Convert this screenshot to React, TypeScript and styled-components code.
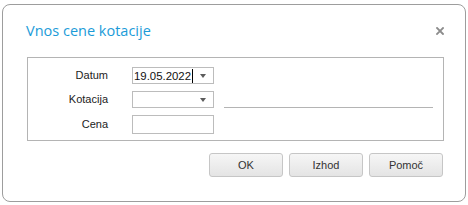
import React from "react";
import styled, { createGlobalStyle } from "styled-components";

const GlobalStyle = createGlobalStyle`
  html, body {
    margin: 0;
    padding: 0;
    background: #fff;
  }
  body {
    font-family: "Liberation Sans", Arial, sans-serif;
    font-size: 11px;
    color: #222;
  }
`;

type FieldProps = {
  label: string;
  value?: string;
  dropdown?: boolean;
  focused?: boolean;
  tall?: boolean;
  line?: boolean;
};

const Field = ({ label, value, dropdown, focused, tall, line }: FieldProps) => (
  <>
    <Label>{label}</Label>
    <InputBox $tall={tall}>
      <InputText>
        {value}
        {focused && <Caret />}
      </InputText>
      {dropdown && <Arrow />}
    </InputBox>
    <Cell>{line && <Rule />}</Cell>
  </>
);

const App = () => {
  return (
    <>
      <GlobalStyle />
      <Dialog>
        <Header>
          <Title>Vnos cene kotacije</Title>
          <CloseButton aria-label="close">
            <svg width="8" height="8" viewBox="0 0 8 8">
              <path
                d="M1 1 L7 7 M7 1 L1 7"
                stroke="#8c8c8c"
                strokeWidth="1.8"
                strokeLinecap="square"
              />
            </svg>
          </CloseButton>
        </Header>

        <FieldBox>
          <Field label="Datum" value="19.05.2022" dropdown focused />
          <Field label="Kotacija" dropdown line />
          <Field label="Cena" tall />
        </FieldBox>

        <Buttons>
          <Button>OK</Button>
          <Button>Izhod</Button>
          <Button>Pomoč</Button>
        </Buttons>
      </Dialog>
    </>
  );
};
export default App;

const Dialog = styled.div`
  box-sizing: border-box;
  width: 464px;
  margin: 4px 0 0 2px;
  border: 1px solid #9d9d9d;
  border-radius: 8px;
  background: #fff;
  padding: 13px 21px 24px 24px;
`;

const Header = styled.div`
  display: flex;
  align-items: center;
  justify-content: space-between;
  height: 26px;
  margin-left: -1px;
`;

const Title = styled.h1`
  margin: 0;
  font-family: "Open Sans", "Noto Sans", sans-serif;
  font-weight: 400;
  font-size: 14.5px;
  color: #1b9bd8;
  line-height: 20px;
`;

const CloseButton = styled.button`
  display: flex;
  align-items: center;
  justify-content: center;
  width: 9px;
  height: 9px;
  padding: 0;
  border: none;
  background: none;
  cursor: pointer;
`;

const FieldBox = styled.div`
  box-sizing: border-box;
  width: 417px;
  margin-top: 13px;
  border: 1px solid #b4b4b4;
  padding: 9px 0 7px 0;
  display: grid;
  grid-template-columns: 104px 82px 219px;
  grid-template-rows: 17px 17px 18px;
  row-gap: 7px;
  align-items: center;
`;

const Label = styled.div`
  text-align: right;
  padding-right: 24px;
  color: #222;
  line-height: 17px;
`;

const InputBox = styled.div<{ $tall?: boolean }>`
  box-sizing: border-box;
  height: ${({ $tall }) => ($tall ? "19px" : "17px")};
  border: 1px solid #bcbcbc;
  background: #fff;
  display: flex;
  align-items: center;
  padding: 0 7px 0 1px;
`;

const InputText = styled.span`
  flex: 1;
  display: flex;
  align-items: center;
  font-size: 11.4px;
  color: #111;
  white-space: nowrap;
`;

const Caret = styled.span`
  display: inline-block;
  width: 1px;
  height: 14px;
  background: #000;
  margin-left: 1px;
`;

const Arrow = styled.span`
  width: 0;
  height: 0;
  border-left: 3.5px solid transparent;
  border-right: 3.5px solid transparent;
  border-top: 4px solid #5c5c5c;
`;

const Cell = styled.div`
  align-self: stretch;
  display: flex;
  align-items: flex-end;
  padding-left: 10px;
`;

const Rule = styled.div`
  width: 209px;
  height: 1px;
  background: #b4b4b4;
`;

const Buttons = styled.div`
  display: flex;
  justify-content: flex-end;
  gap: 6px;
  width: 416px;
  margin-top: 12px;
`;

const Button = styled.button`
  box-sizing: border-box;
  width: 74px;
  height: 24px;
  border: 1px solid #c6c6c6;
  border-radius: 3px;
  background: linear-gradient(#f6f6f6, #e4e4e4);
  font-family: "Liberation Sans", Arial, sans-serif;
  font-size: 11px;
  font-weight: 400;
  color: #333;
  cursor: pointer;
  padding: 0;
`;
